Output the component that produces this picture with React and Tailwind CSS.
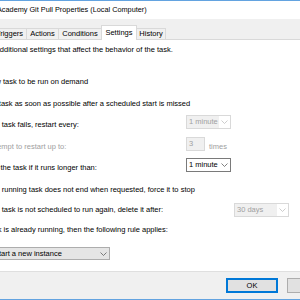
import React from "react";

const font = "font-['Liberation_Sans',Arial,sans-serif]";

function Chevron({ color = "#606060" }) {
  return (
    <svg width="7" height="4" viewBox="0 0 7 4" style={{ color }}>
      <path d="M0.5 0.5 L3.5 3.5 L6.5 0.5" fill="none" stroke="currentColor" strokeWidth="0.8" />
    </svg>
  );
}

// combo box inside the tab page
function Combo({ value, disabled, width }) {
  if (disabled) {
    return (
      <div className={`flex h-[14px] ${width} border border-[#d9d9d9] bg-white`}>
        <div className="flex flex-1 items-center bg-[#f0f0f0] pl-[2px] text-[#a0a0a0]">{value}</div>
        <div className="flex w-[11px] items-center justify-center">
          <Chevron color="#c0c0c0" />
        </div>
      </div>
    );
  }
  return (
    <div className={`flex h-[14px] ${width} items-center border border-[#7a7a7a] bg-white`}>
      <div className="flex-1 pl-[2px] text-black">{value}</div>
      <div className="flex w-[11px] items-center justify-center">
        <Chevron />
      </div>
    </div>
  );
}

function Check({ label, className = "" }) {
  return (
    <div className={`flex h-[14px] items-center ${className}`}>
      <span className="mr-[14px] h-[9px] w-[9px] border border-[#333] bg-white" />
      <span className="whitespace-nowrap">{label}</span>
    </div>
  );
}

export default function App() {
  const tabs = [
    { name: "Triggers", w: "w-[34px]" },
    { name: "Actions", w: "w-[32px]" },
    { name: "Conditions", w: "w-[43px]" },
  ];

  return (
    <div className={`flex h-[300px] w-[300px] flex-col overflow-hidden border-y border-[#63a3e0] bg-[#f0f0f0] text-[7.5px] leading-none text-black ${font}`}>
      {/* barra de titulo */}
      <div className="flex h-[18px] shrink-0 items-center bg-white pl-0">
        <span className="ml-[-3px] whitespace-nowrap text-[7.3px]">Academy Git Pull Properties (Local Computer)</span>
      </div>

      {/* pestañas */}
      <div className="flex h-[21px] shrink-0 items-end border-b border-[#d9d9d9] pl-0">
        <div className="ml-[-8px] flex items-end">
          {tabs.map((t) => (
            <div
              key={t.name}
              className={`flex h-[11px] ${t.w} items-center justify-center border-l border-t border-[#d9d9d9] bg-[#f0f0f0]`}
            >
              {t.name}
            </div>
          ))}
          <div className="relative z-10 mb-[-1px] flex h-[15px] w-[36px] items-center justify-center border-x border-t border-[#d9d9d9] bg-white pb-[1px]">
            Settings
          </div>
          <div className="flex h-[11px] w-[29px] items-center justify-center border-r border-t border-[#d9d9d9] bg-[#f0f0f0]">
            History
          </div>
        </div>
      </div>

      {/* pagina Settings */}
      <div className="flex flex-1 flex-col border-b border-[#dfdfdf] bg-white">
        <div className="ml-[-40px] flex flex-col">
          <div className="mt-[3px] flex h-[14px] items-center pl-[9px]">
            <span className="whitespace-nowrap">Specify additional settings that affect the behavior of the task.</span>
          </div>

          <Check className="mt-[18px]" label="Allow task to be run on demand" />
          <Check className="mt-[8px]" label="Run task as soon as possible after a scheduled start is missed" />

          <div className="mt-[7px] flex h-[14px] items-center">
            <Check className="w-[226px]" label="If the task fails, restart every:" />
            <div className="mt-[-7px]">
              <Combo value="1 minute" disabled width="w-[45px]" />
            </div>
          </div>

          <div className="mt-[8px] flex h-[14px] items-center">
            <span className="w-[226px] whitespace-nowrap pl-[28px] text-[#a0a0a0]">Attempt to restart up to:</span>
            <div className="mt-[-7px] flex h-[14px] w-[19px] items-center border border-[#d9d9d9] bg-[#f0f0f0] pl-[2px] text-[#a0a0a0]">
              3
            </div>
            <span className="ml-[4px] text-[#a0a0a0]">times</span>
          </div>

          <div className="mt-[7px] flex h-[14px] items-center">
            <Check className="w-[226px]" label="Stop the task if it runs longer than:" />
            <div className="mt-[-6px]">
              <Combo value="1 minute" width="w-[45px]" />
            </div>
          </div>

          <Check className="mt-[8px]" label="If the running task does not end when requested, force it to stop" />

          <div className="mt-[6px] flex h-[14px] items-center">
            <Check className="w-[274px]" label="If the task is not scheduled to run again, delete it after:" />
            <Combo value="30 days" disabled width="w-[55px]" />
          </div>

          <div className="mt-[6px] flex h-[14px] items-center pl-[9px]">
            <span className="whitespace-nowrap">If the task is already running, then the following rule applies:</span>
          </div>

          <div className="mt-[10px] pl-[7px]">
            <div className="flex h-[13px] w-[143px] items-center border border-[#adadad] bg-[#e5e5e5]">
              <span className="flex-1 pl-[3px]">Do not start a new instance</span>
              <span className="flex w-[12px] justify-center">
                <Chevron />
              </span>
            </div>
          </div>
        </div>
      </div>

      {/* botones */}
      <div className="flex h-[27px] shrink-0 items-start gap-[9px] pl-[226px] pt-[6px]">
        <button className="flex h-[15px] w-[52px] shrink-0 items-center justify-center border border-[#0078d7] bg-[#e1e1e1] shadow-[inset_0_0_0_1px_#0078d7]">
          OK
        </button>
        <button className="flex h-[15px] w-[52px] shrink-0 items-center justify-center border border-[#adadad] bg-[#e1e1e1]">
          Cancel
        </button>
      </div>
    </div>
  );
}
